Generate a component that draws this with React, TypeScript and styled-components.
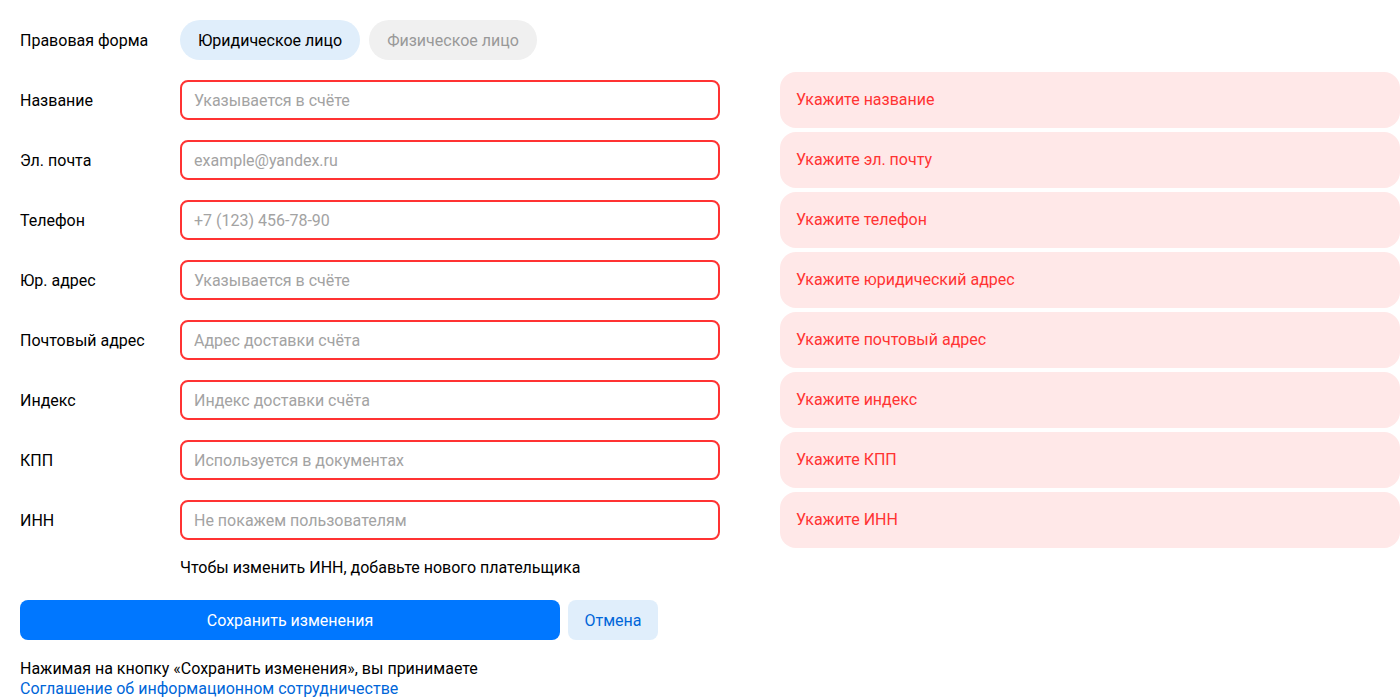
import React from "react";
import styled, { createGlobalStyle } from "styled-components";

const Global = createGlobalStyle`
  html, body { margin: 0; padding: 0; background: #fff; }
  body { font-family: Roboto, "Liberation Sans", Arial, sans-serif; font-size: 16px; color: #000; }
  * { box-sizing: border-box; }
`;

const Page = styled.div`
  padding: 10px 0 0 20px;
  width: 1400px;
`;

const Grid = styled.div`
  display: grid;
  grid-template-columns: 160px 540px 60px 620px;
  grid-auto-rows: 60px;
  align-items: center;
`;

const Label = styled.div`
  font-size: 16px;
  line-height: 20px;
  padding-top: 2px;
`;

const Toggle = styled.div`
  display: flex;
  gap: 9px;
  grid-column: 2 / 5;
`;

const Pill = styled.button<{ $active?: boolean }>`
  height: 40px;
  padding: 0 18px;
  border: none;
  border-radius: 20px;
  font: inherit;
  font-size: 16px;
  background: ${(p) => (p.$active ? "#e0eefb" : "#f0f0f0")};
  color: ${(p) => (p.$active ? "#000" : "#999")};
`;

const Input = styled.input`
  width: 540px;
  height: 40px;
  border: 2px solid #ff3333;
  border-radius: 8px;
  padding: 0 12px;
  font: inherit;
  font-size: 16px;
  outline: none;
  &::placeholder { color: #a3a3a3; }
`;

const ErrorBox = styled.div`
  grid-column: 4;
  height: 56px;
  border-radius: 16px;
  background: #ffe8e8;
  color: #ff3333;
  display: flex;
  align-items: center;
  padding: 0 16px 1px;
  font-size: 16px;
`;

const Spacer = styled.div``;

const Hint = styled.div`
  margin: 8px 0 0 160px;
  line-height: 20px;
`;

const Buttons = styled.div`
  display: flex;
  gap: 8px;
  margin-top: 22px;
`;

const Primary = styled.button`
  width: 540px;
  height: 40px;
  border: none;
  border-radius: 8px;
  background: #0077ff;
  color: #fff;
  font: inherit;
  font-size: 16px;
`;

const Secondary = styled.button`
  width: 90px;
  height: 40px;
  border: none;
  border-radius: 8px;
  background: #e0eefb;
  color: #0066d9;
  font: inherit;
  font-size: 16px;
`;

const Footer = styled.div`
  margin-top: 19px;
  line-height: 20px;
`;

const Link = styled.a`
  color: #0066d9;
  text-decoration: none;
  display: block;
`;

const rows = [
  ["Название", "Указывается в счёте", "Укажите название"],
  ["Эл. почта", "example@yandex.ru", "Укажите эл. почту"],
  ["Телефон", "+7 (123) 456-78-90", "Укажите телефон"],
  ["Юр. адрес", "Указывается в счёте", "Укажите юридический адрес"],
  ["Почтовый адрес", "Адрес доставки счёта", "Укажите почтовый адрес"],
  ["Индекс", "Индекс доставки счёта", "Укажите индекс"],
  ["КПП", "Используется в документах", "Укажите КПП"],
  ["ИНН", "Не покажем пользователям", "Укажите ИНН"],
];

export default function App() {
  return (
    <Page>
      <Global />
      <Grid>
        <Label>Правовая форма</Label>
        <Toggle>
          <Pill $active>Юридическое лицо</Pill>
          <Pill>Физическое лицо</Pill>
        </Toggle>
        {rows.map(([l, p, e]) => (
          <React.Fragment key={l}>
            <Label>{l}</Label>
            <Input placeholder={p} />
            <Spacer />
            <ErrorBox>{e}</ErrorBox>
          </React.Fragment>
        ))}
      </Grid>
      <Hint>Чтобы изменить ИНН, добавьте нового плательщика</Hint>
      <Buttons>
        <Primary>Сохранить изменения</Primary>
        <Secondary>Отмена</Secondary>
      </Buttons>
      <Footer>
        Нажимая на кнопку «Сохранить изменения», вы принимаете
        <Link href="#">Соглашение об информационном сотрудничестве</Link>
      </Footer>
    </Page>
  );
}
